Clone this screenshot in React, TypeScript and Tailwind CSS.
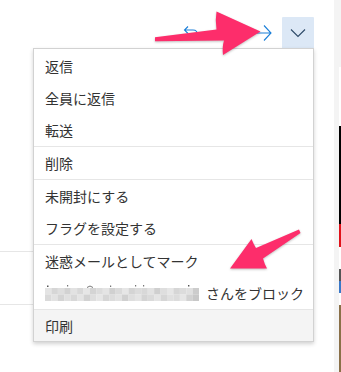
import React from "react";

const mosaic: string[][] = [
  ["#e4e4e4","#d6d6d6","#dedede","#d2d2d2","#e2e2e2","#d8d8d8","#e6e6e6","#d4d4d4","#dcdcdc","#e4e4e4","#d0d0d0","#dadada","#e6e6e6","#d4d4d4","#dcdcdc","#d8d8d8","#e2e2e2","#cfcfcf","#dedede","#e6e6e6","#d6d6d6","#dcdcdc","#e0e0e0","#cccccc"],
  ["#dadada","#e2e2e2","#d4d4d4","#e0e0e0","#d8d8d8","#e4e4e4","#d2d2d2","#dedede","#e6e6e6","#d6d6d6","#dcdcdc","#e2e2e2","#d0d0d0","#dedede","#e4e4e4","#d4d4d4","#dadada","#e4e4e4","#d6d6d6","#e0e0e0","#dcdcdc","#e6e6e6","#d2d2d2","#c8c8c8"],
];

function Row({ children, className = "" }: { children: React.ReactNode; className?: string }) {
  return (
    <div className={"h-[32px] flex items-center pl-[11px] text-[14px] leading-none text-[#333333] " + className}>
      {children}
    </div>
  );
}

function Divider() {
  return <div className="h-px bg-[#e6e6e6]" />;
}

export default function App() {
  return (
    <div
      className="relative w-[341px] h-[372px] overflow-hidden bg-white flex"
      style={{ fontFamily: '"Noto Sans CJK JP", "Noto Sans", sans-serif' }}
    >
      {/* main area */}
      <div className="w-[334px] h-full flex flex-col">
        <div className="flex items-center justify-end pt-[17px] pr-[20px]">
          <svg width="16" height="16" viewBox="0 0 16 16" className="mr-[57px] mt-[-3px]" fill="none" stroke="#1b7fd8" strokeWidth="1.1">
            <path d="M5 3.5 L1.5 7 L5 10.5 M1.5 7 H10 C13 7 14.5 9 14.5 12" />
          </svg>
          <svg width="16" height="16" viewBox="0 0 16 16" className="mr-[10px]" fill="none" stroke="#1b7fd8" strokeWidth="1.1">
            <path d="M0.5 8 H15 M8 0.5 L15 8 L8 15.5" />
          </svg>
          <div className="w-[32px] h-[31px] bg-[#dce8f6] flex items-center justify-center rounded-t-[1px]">
            <svg width="16" height="10" viewBox="0 0 16 10" fill="none" stroke="#2d4a68" strokeWidth="1.1">
              <path d="M1 1.5 L8 8.5 L15 1.5" />
            </svg>
          </div>
        </div>
        <div className="mt-[203px] w-[60px] flex flex-col">
          <div className="h-px bg-[#e6e6e6]" />
          <div className="h-[52px]" />
          <div className="h-px bg-[#e6e6e6]" />
        </div>
      </div>
      {/* right strip */}
      <div className="w-[7px] h-full bg-[#f4f4f4] flex">
        <div className="ml-[5px] w-[2px] mt-[67px] flex flex-col">
          <div className="h-[59px] bg-white" />
          <div className="h-[98px] bg-black" />
          <div className="h-[23px] bg-[#e0121a]" />
          <div className="h-[22px] bg-white" />
          <div className="h-[12px] bg-[#555555]" />
          <div className="h-[12px] bg-[#3a78c8]" />
          <div className="h-[12px] bg-white" />
          <div className="flex-1 bg-[#8a7048]" />
        </div>
      </div>

      {/* dropdown menu */}
      <div className="absolute left-[33px] top-[48px] w-[281px] bg-white border border-[#d2d2d2] shadow-[0_2px_4px_rgba(0,0,0,0.18)] flex flex-col">
        <div className="pt-[1px]">
          <Row>返信</Row>
          <Row>全員に返信</Row>
          <Row>転送</Row>
        </div>
        <Divider />
        <Row>削除</Row>
        <Divider />
        <Row>未開封にする</Row>
        <Row>フラグを設定する</Row>
        <Divider />
        <Row>迷惑メールとしてマーク</Row>
        <Row>
          <svg width="154" height="16" viewBox="0 0 154 16" className="shrink-0">
            {mosaic.map((r, ri) =>
              r.map((c, ci) => (
                <rect key={ri + "-" + ci} x={ci * 6.42} y={3 + ri * 6.5} width="6.5" height="6.6" fill={c} />
              ))
            )}
            <rect x="2" y="0.5" width="1.5" height="1.5" fill="#555" />
            <rect x="22" y="0" width="1.2" height="1.5" fill="#777" />
            <path d="M42 2.5 Q45 -0.5 48 2.5" stroke="#777" strokeWidth="1" fill="none" />
            <rect x="65" y="0.5" width="1.2" height="1.5" fill="#777" />
            <rect x="90" y="0" width="1.2" height="1.5" fill="#777" />
            <rect x="98" y="0" width="1.2" height="1.5" fill="#777" />
            <rect x="143" y="0" width="1.4" height="1.5" fill="#555" />
          </svg>
          <span className="ml-[7px]">さんをブロック</span>
        </Row>
        <Divider />
        <div className="h-[31px] flex items-center pl-[11px] text-[14px] leading-none text-[#333333] bg-[#f4f4f4]">
          印刷
        </div>
      </div>

      {/* annotation arrows */}
      <svg
        className="absolute left-0 top-0 pointer-events-none"
        width="341"
        height="372"
        viewBox="0 0 341 372"
        style={{ filter: "drop-shadow(0 1px 1px rgba(0,0,0,0.25))" }}
      >
        <path
          d="M155 37.3 L216.5 29.5 Q215 20 216.5 11.5 L260.5 31.5 L223 55 Q222 47 224 40.5 L155 41.3 Z"
          fill="#fd2d6b"
        />
        <path
          d="M230 268.5 L251.5 239 Q253.5 244 256 248 L299 229.5 L300.5 233 L263 258.5 Q264.5 264 267 268.5 Z"
          fill="#fd2d6b"
        />
      </svg>
    </div>
  );
}
